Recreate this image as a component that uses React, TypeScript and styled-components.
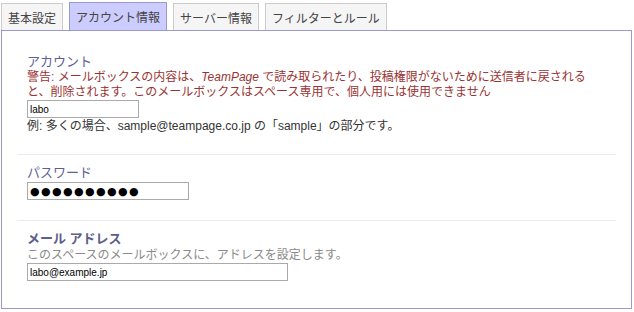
import React from "react";
import styled, { createGlobalStyle } from "styled-components";

const GlobalStyle = createGlobalStyle`
  html, body {
    margin: 0;
    padding: 0;
    background: #ffffff;
  }
  body {
    font-family: "Liberation Sans", "Noto Sans CJK JP", sans-serif;
    font-size: 12px;
    color: #333333;
  }
`;

const Page = styled.div`
  width: 634px;
  height: 312px;
  padding: 2px 2px 0 1px;
  box-sizing: border-box;
`;

const TabBar = styled.div`
  display: flex;
  align-items: flex-end;
  gap: 6px;
  height: 28px;
`;

const Tab = styled.div<{ $active?: boolean }>`
  height: ${(p) => (p.$active ? "28px" : "27px")};
  box-sizing: border-box;
  padding: 0 6px;
  display: flex;
  align-items: center;
  border: 1px solid ${(p) => (p.$active ? "#9c9acc" : "#cccccc")};
  border-bottom: none;
  background: ${(p) => (p.$active ? "#ccccff" : "#f5f5f5")};
  color: #444444;
  font-size: 12px;
  white-space: nowrap;
  cursor: pointer;
`;

const Panel = styled.div`
  border: 1px solid #9c9acc;
  height: 279px;
  box-sizing: border-box;
  padding: 13px 15px 0;
`;

const Section = styled.div`
  padding: 10px 10px 20px;
  & + & {
    border-top: 1px solid #ebebeb;
  }
`;

const Label = styled.div<{ $bold?: boolean }>`
  font-size: 13px;
  line-height: 16px;
  font-weight: ${(p) => (p.$bold ? 700 : 400)};
  color: ${(p) => (p.$bold ? "#5e5e88" : "#5f5f96")};
`;

const Warning = styled.div`
  font-size: 12px;
  line-height: 15px;
  color: #993333;
  em {
    font-style: italic;
  }
`;

const Hint = styled.div<{ $muted?: boolean }>`
  font-size: 12px;
  line-height: 16px;
  color: ${(p) => (p.$muted ? "#8a8a8a" : "#333333")};
`;

const Field = styled.input<{ $w: number; $dots?: boolean }>`
  display: block;
  width: ${(p) => p.$w}px;
  height: 18px;
  box-sizing: border-box;
  margin: ${(p) => (p.$dots ? "1px 0 0" : "0")};
  padding: 0 2px;
  border: 1px solid #aaaaaa;
  outline: none;
  background: #ffffff;
  color: #000000;
  font-family: ${(p) => (p.$dots ? '"DejaVu Sans", sans-serif' : '"Liberation Sans", sans-serif')};
  font-size: ${(p) => (p.$dots ? "11px" : "10px")};
  letter-spacing: ${(p) => (p.$dots ? "1.4px" : "0")};
`;

const tabs = ["基本設定", "アカウント情報", "サーバー情報", "フィルターとルール"];

export default function App() {
  return (
    <>
      <GlobalStyle />
      <Page>
        <TabBar>
          {tabs.map((t, i) => (
            <Tab key={t} $active={i === 1}>
              {t}
            </Tab>
          ))}
        </TabBar>
        <Panel>
          <Section>
            <Label>アカウント</Label>
            <Warning>
              警告: メールボックスの内容は、<em>TeamPage</em> で読み取られたり、投稿権限がないために送信者に戻される
              <br />
              と、削除されます。このメールボックスはスペース専用で、個人用には使用できません
            </Warning>
            <Field $w={112} defaultValue="labo" />
            <Hint>例: 多くの場合、sample@teampage.co.jp の「sample」の部分です。</Hint>
          </Section>
          <Section>
            <Label>パスワード</Label>
            <Field $w={162} $dots readOnly value={"●●●●●●●●●●"} />
          </Section>
          <Section>
            <Label $bold>メール アドレス</Label>
            <Hint $muted>このスペースのメールボックスに、アドレスを設定します。</Hint>
            <Field $w={261} defaultValue="labo@example.jp" />
          </Section>
        </Panel>
      </Page>
    </>
  );
}
